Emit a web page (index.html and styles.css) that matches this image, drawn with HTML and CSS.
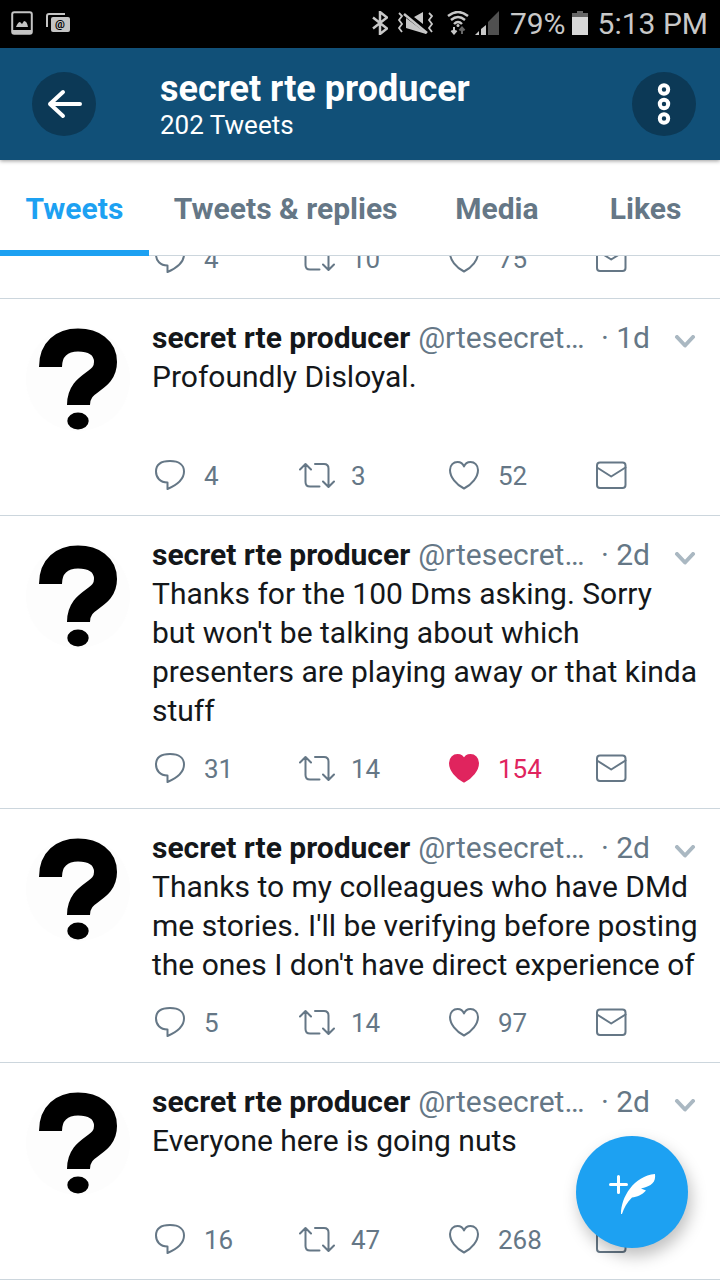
FILE: index.html
```html
<!DOCTYPE html>
<html lang="en">
<head>
<meta charset="utf-8">
<meta name="viewport" content="width=device-width, initial-scale=1">
<title>secret rte producer</title>
<link rel="stylesheet" href="styles.css">
</head>
<body>
<svg class="sprite" aria-hidden="true">
  <symbol id="reply" viewBox="0 0 36 32"><path d="M15.500 23.500C8 23.500 4 18.500 4 12.500C4 6 8.500 2 18 2C27.500 2 32 6.500 32 12.500C32 20.500 26 25.500 15.500 30Z"/></symbol>
  <symbol id="retweet" viewBox="0 0 36 32"><path d="M1 10.500L6.500 5L12 10.500M6.500 5.500V23Q6.500 27.500 11 27.500H20.500M16 5H25Q29.500 5 29.500 9.500V27.500M24 22.500L29.500 28L35 22.500"/></symbol>
  <symbol id="heart" viewBox="0 0 36 32"><path d="M18 29.500C10 25.500 4 18 4 11C4 6 7.500 3 11.500 3C14.500 3 17 4.800 18 7.500C19 4.800 21.500 3 24.500 3C28.500 3 32 6 32 11C32 18 26 25.500 18 29.500Z"/></symbol>
  <symbol id="mail" viewBox="0 0 36 32"><rect x="4" y="3.500" width="28.500" height="25.500" rx="3"/><path d="M4 8.500L18.200 17.500L32.500 8.500"/></symbol>
  <symbol id="chevron" viewBox="0 0 22 14"><path d="M3 2L11 10.500L19 2"/></symbol>
  <symbol id="question" viewBox="0 0 108 108"><circle cx="54" cy="54" r="52" fill="#fdfdfd"/><path d="M26.500 42C26.500 24 38 15 54 15C70 15 81.500 23 81.500 37C81.500 59 54.500 55 54.500 80" fill="none" stroke="#000" stroke-width="23"/><ellipse cx="54" cy="96" rx="10.700" ry="8.500"/></symbol>
</svg>

<div class="status">
  <div class="status-group notices">
    <svg width="22" height="24" viewBox="0 0 22 24"><rect x="1.200" y="1.200" width="19.600" height="21.600" rx="2" fill="none" stroke="#c4c4c4" stroke-width="2"/><path d="M2 19h18v3H2zM5 16q2-5 4-5l2 2 2-3q3 0 4 6z" fill="#c4c4c4"/></svg>
    <svg width="24" height="20" viewBox="0 0 24 20"><path d="M1 14V3q0-2 2-2h16" fill="none" stroke="#c4c4c4" stroke-width="2"/><rect x="5" y="4" width="19" height="15" rx="2" fill="#c4c4c4"/><text x="9" y="15" class="at">@</text></svg>
  </div>
  <div class="status-group signals">
    <svg width="16" height="24" viewBox="0 0 16 24"><path d="M1 6.500L15 17.500L8 23V1L15 6.500L1 17.500" fill="none" stroke="#c8c8c8" stroke-width="2.500"/></svg>
    <svg class="muted" width="37" height="24" viewBox="0 0 37 24"><path d="M9 7L29 22V23L9 17zM17 6l9-5v12z" fill="#c8c8c8"/><path d="M7 3L30 22" stroke="#c8c8c8" stroke-width="2.500"/><path d="M2 2l3 3-3 4 3 4-3 4 3 4M32 2l3 3-3 4 3 4-3 4 3 4" fill="none" stroke="#c8c8c8" stroke-width="1.800"/></svg>
    <svg width="22" height="24" viewBox="0 0 22 24"><path d="M1 5Q11-3 21 5M4 9Q11 3 18 9M7 13Q11 9 15 13" fill="none" stroke="#c8c8c8" stroke-width="2.400"/><circle cx="11" cy="14.500" r="1.500" fill="#c8c8c8"/><path d="M7 16v6M4.500 19.500L7 22.500L9.500 19.500" fill="none" stroke="#c8c8c8" stroke-width="2"/><path d="M15 23v-6M12.500 19.500L15 16.500L17.500 19.500" fill="none" stroke="#666" stroke-width="2"/></svg>
    <svg class="cell" width="24" height="24" viewBox="0 0 24 24"><path d="M24 0V24H13V11z" fill="#505050"/><path d="M0 24l4-4v4zM6 24v-6l5-4v10z" fill="#c8c8c8"/></svg>
    <span>79%</span>
    <svg width="16" height="24" viewBox="0 0 16 24"><path d="M5 0h6v2h5v5H0V2h5z" fill="#666"/><path d="M0 6h16v18H0z" fill="#d8d8d8"/></svg>
    <span class="clock">5:13 PM</span>
  </div>
</div>

<header class="header">
  <button class="round" aria-label="Back"><svg width="36" height="32" viewBox="0 0 36 32"><path d="M17 4L4 16L17 28M4 16H34"/></svg></button>
  <div class="heading">
    <h1>secret rte producer</h1>
    <p>202 Tweets</p>
  </div>
  <button class="round" aria-label="More options"><svg width="14" height="44" viewBox="0 0 14 44"><circle cx="7" cy="7.500" r="4.200"/><circle cx="7" cy="22" r="4.200"/><circle cx="7" cy="36.500" r="4.200"/></svg></button>
</header>

<nav class="tabs">
  <a class="tab active" href="#tweets" aria-current="page">Tweets</a>
  <a class="tab wide" href="#replies">Tweets &amp; replies</a>
  <a class="tab" href="#media">Media</a>
  <a class="tab" href="#likes">Likes</a>
</nav>

<main class="feed" id="tweets">
  <article class="tweet scrolled">
    <div class="content">
      <div class="actions">
        <button aria-label="Reply"><svg><use href="#reply"/></svg>4</button>
        <button aria-label="Retweet"><svg><use href="#retweet"/></svg>10</button>
        <button aria-label="Like"><svg><use href="#heart"/></svg>75</button>
        <button aria-label="Message"><svg><use href="#mail"/></svg></button>
      </div>
    </div>
  </article>

  <article class="tweet">
    <svg class="avatar"><use href="#question"/></svg>
    <div class="content">
      <div class="body">
        <div class="byline"><strong>secret rte producer</strong><span class="handle">@rtesecret…</span><span class="time">· 1d</span><button class="more" aria-label="More"><svg><use href="#chevron"/></svg></button></div>
        <p>Profoundly Disloyal.</p>
      </div>
      <div class="actions">
        <button aria-label="Reply"><svg><use href="#reply"/></svg>4</button>
        <button aria-label="Retweet"><svg><use href="#retweet"/></svg>3</button>
        <button aria-label="Like"><svg><use href="#heart"/></svg>52</button>
        <button aria-label="Message"><svg><use href="#mail"/></svg></button>
      </div>
    </div>
  </article>

  <article class="tweet">
    <svg class="avatar"><use href="#question"/></svg>
    <div class="content">
      <div class="body">
        <div class="byline"><strong>secret rte producer</strong><span class="handle">@rtesecret…</span><span class="time">· 2d</span><button class="more" aria-label="More"><svg><use href="#chevron"/></svg></button></div>
        <p>Thanks for the 100 Dms asking. Sorry but won't be talking about which presenters are playing away or that kinda stuff</p>
      </div>
      <div class="actions">
        <button aria-label="Reply"><svg><use href="#reply"/></svg>31</button>
        <button aria-label="Retweet"><svg><use href="#retweet"/></svg>14</button>
        <button class="liked" aria-label="Liked" aria-pressed="true"><svg><use href="#heart"/></svg>154</button>
        <button aria-label="Message"><svg><use href="#mail"/></svg></button>
      </div>
    </div>
  </article>

  <article class="tweet">
    <svg class="avatar"><use href="#question"/></svg>
    <div class="content">
      <div class="body">
        <div class="byline"><strong>secret rte producer</strong><span class="handle">@rtesecret…</span><span class="time">· 2d</span><button class="more" aria-label="More"><svg><use href="#chevron"/></svg></button></div>
        <p>Thanks to my colleagues who have DMd me stories. I'll be verifying before posting the ones I don't have direct experience of</p>
      </div>
      <div class="actions">
        <button aria-label="Reply"><svg><use href="#reply"/></svg>5</button>
        <button aria-label="Retweet"><svg><use href="#retweet"/></svg>14</button>
        <button aria-label="Like"><svg><use href="#heart"/></svg>97</button>
        <button aria-label="Message"><svg><use href="#mail"/></svg></button>
      </div>
    </div>
  </article>

  <article class="tweet">
    <svg class="avatar"><use href="#question"/></svg>
    <div class="content">
      <div class="body">
        <div class="byline"><strong>secret rte producer</strong><span class="handle">@rtesecret…</span><span class="time">· 2d</span><button class="more" aria-label="More"><svg><use href="#chevron"/></svg></button></div>
        <p>Everyone here is going nuts</p>
      </div>
      <div class="actions">
        <button aria-label="Reply"><svg><use href="#reply"/></svg>16</button>
        <button aria-label="Retweet"><svg><use href="#retweet"/></svg>47</button>
        <button aria-label="Like"><svg><use href="#heart"/></svg>268</button>
        <button aria-label="Message"><svg><use href="#mail"/></svg></button>
      </div>
    </div>
  </article>
</main>

<button class="compose" aria-label="Compose tweet">
  <svg width="48" height="44" viewBox="0 0 48 44"><path d="M2.500 14.500H18.500M10.500 6.500V22.500" fill="none" stroke="#fff" stroke-width="3" stroke-linecap="round"/><path d="M13 44C13 27 26 6 47 4C48 12 44 16 33 18.500L38 20.500C34 25 29 27 24 27.500C19 32 16 38 14 44Z" fill="#fff"/></svg>
</button>
</body>
</html>
```

FILE: styles.css
```css
* { box-sizing: border-box; }

body {
  margin: 0;
  background: #fff;
  color: #14171a;
  font-family: Roboto, "Liberation Sans", sans-serif;
  font-size: 30px;
  line-height: 39px;
}

h1, p { margin: 0; }

button {
  padding: 0;
  border: 0;
  background: none;
  color: inherit;
  font: inherit;
  cursor: pointer;
}

svg { display: block; flex: none; }

.sprite { position: absolute; width: 0; height: 0; }

.status {
  display: flex;
  align-items: center;
  justify-content: space-between;
  height: 48px;
  padding: 0 12px 2px 11px;
  background: #000;
  color: #c8c8c8;
}

.status-group { display: flex; align-items: center; }
.notices { gap: 13px; }
.signals { gap: 6px; }
.signals svg:first-child { margin-right: 3px; }
.signals .muted { margin-right: 7px; }
.signals .cell { margin-right: 5px; }
.clock { margin-left: 4px; }
.at { font-size: 11px; font-weight: 700; fill: #000; }

.header {
  position: relative;
  display: flex;
  align-items: center;
  height: 112px;
  padding: 0 24px 0 32px;
  background: #115078;
  color: #fff;
  box-shadow: 0 1px 4px rgba(0, 0, 0, 0.4);
}

.round {
  display: flex;
  align-items: center;
  justify-content: center;
  width: 64px;
  height: 64px;
  border-radius: 50%;
  background: #0c3956;
}

.round svg {
  fill: none;
  stroke: #fff;
  stroke-width: 4;
  stroke-linecap: round;
  stroke-linejoin: round;
}

.heading { flex: 1; margin-left: 64px; }
.heading h1 { font-size: 36px; line-height: 42px; }
.heading p { font-size: 26px; line-height: 30px; }

.tabs {
  display: flex;
  height: 96px;
  border-bottom: 1px solid #ccd6dd;
}

.tab {
  display: flex;
  flex: 1;
  align-items: center;
  justify-content: center;
  height: 96px;
  color: #657786;
  font-weight: 700;
  text-decoration: none;
}

.tab.wide { flex: none; padding-right: 25px; padding-left: 25px; }

.tab.active {
  color: #1da1f2;
  box-shadow: inset 0 -6px #1da1f2;
}

.feed { overflow: hidden; }

.tweet {
  display: flex;
  gap: 20px;
  padding: 19px 24px 22px;
  border-bottom: 1px solid #ccd6dd;
}

.tweet.scrolled {
  margin-top: -14px;
  padding-top: 0;
  padding-left: 152px;
}

.avatar { width: 108px; height: 108px; margin-top: 7px; }
.content { flex: 1; min-width: 0; }
.body { min-height: 119px; margin-bottom: 22px; }
.body p { margin-right: -4px; }
.byline { display: flex; color: #657786; }
.byline strong { color: #14171a; }
.handle { flex: 1; margin-left: 8px; white-space: nowrap; }
.more { margin: 8px 0 0 24px; color: #aab8c2; }
.more svg { width: 22px; height: 14px; }

.more svg,
.actions svg {
  fill: none;
  stroke: currentColor;
  stroke-width: 2;
  stroke-linejoin: round;
  stroke-linecap: round;
}

.more svg { stroke-width: 4; }

.actions {
  display: grid;
  grid-template-columns: repeat(3, 1fr) 103px;
  color: #657786;
  font-size: 26px;
  line-height: 34px;
}

.actions button { display: flex; gap: 16px; text-align: left; }
.actions svg { width: 36px; height: 32px; }
.actions .liked { color: #e0245e; }
.actions .liked svg { fill: currentColor; }

.compose {
  position: fixed;
  right: 32px;
  bottom: 32px;
  display: flex;
  align-items: center;
  justify-content: center;
  width: 112px;
  height: 112px;
  border-radius: 50%;
  background: #1da1f2;
  box-shadow: 3px 8px 16px rgba(0, 0, 0, 0.25);
}
```
